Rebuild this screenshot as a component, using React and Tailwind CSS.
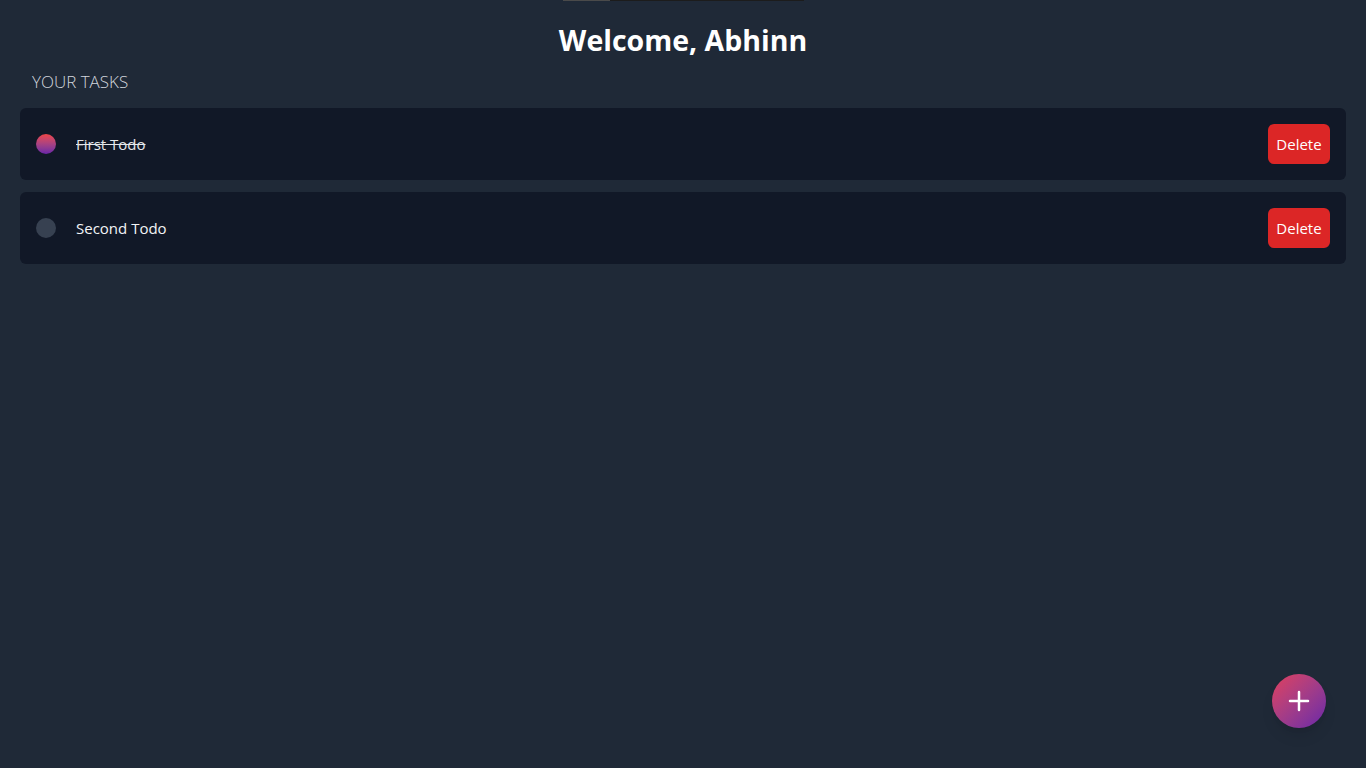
import React from "react";

const todos = [
  { id: 1, title: "First Todo", done: true },
  { id: 2, title: "Second Todo", done: false },
];

const App = () => {
  return (
    <div
      className="relative min-h-screen bg-[#1f2937] text-white"
      style={{ fontFamily: '"Segoe UI", "Open Sans", "Noto Sans", sans-serif' }}
    >
      {/* thin strip at the very top */}
      <div className="flex justify-center">
        <div className="flex h-px w-[241px] bg-[#1c1c1c]">
          <div className="w-[47px] bg-[#4a4a4a]" />
        </div>
      </div>

      <h1 className="pt-[20px] text-center text-[28.5px] font-bold leading-[38px]">
        Welcome, Abhinn
      </h1>

      <div className="px-5">
        <h2 className="mt-[10px] px-3 text-[17px] font-light leading-[26px] text-gray-300">
          YOUR TASKS
        </h2>

        <div className="mt-[13px] flex flex-col gap-3">
          {todos.map((todo) => (
            <div
              key={todo.id}
              className="flex h-[72px] items-center justify-between rounded-md bg-[#111827] px-4"
            >
              <div className="flex items-center gap-5">
                <span
                  className={
                    todo.done
                      ? "h-5 w-5 rounded-full bg-gradient-to-b from-[#ef4444] to-[#6b21a8]"
                      : "h-5 w-5 rounded-full bg-[#374151]"
                  }
                />
                <span
                  className={
                    todo.done
                      ? "text-[15px] text-gray-200 line-through"
                      : "text-[15px] text-gray-100"
                  }
                >
                  {todo.title}
                </span>
              </div>
              <button className="h-10 w-[62px] rounded-md bg-[#dc2626] text-[15px] text-white">
                Delete
              </button>
            </div>
          ))}
        </div>
      </div>

      {/* floating add button */}
      <button className="absolute bottom-[40px] right-[40px] flex h-[54px] w-[54px] items-center justify-center rounded-full bg-gradient-to-br from-[#e23d5a] to-[#6b21a8] shadow-lg">
        <svg width="22" height="22" viewBox="0 0 22 22" fill="none">
          <path d="M11 2v18M2 11h18" stroke="white" strokeWidth="2.5" strokeLinecap="round" />
        </svg>
      </button>
    </div>
  );
};

export default App;
